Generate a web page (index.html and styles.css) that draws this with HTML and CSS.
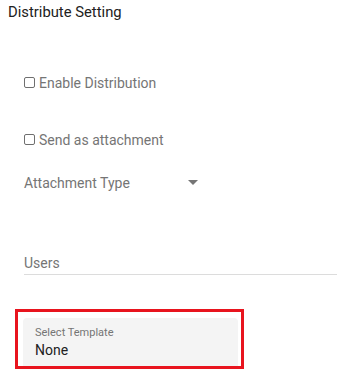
FILE: index.html
```html
<!DOCTYPE html>
<html>
<head>
<meta charset="utf-8">
<link rel="stylesheet" href="styles.css">
</head>
<body>
<div class="page">
  <div class="title">Distribute Setting</div>
  <div class="form">
    <label class="check check-first"><span class="box"></span><span>Enable Distribution</span></label>
    <label class="check check-second"><span class="box"></span><span>Send as attachment</span></label>
    <div class="select">
      <span>Attachment Type</span>
      <svg class="caret" width="10" height="5" viewBox="0 0 10 5"><path d="M0 0H10L5 5Z" fill="#757575"/></svg>
    </div>
    <div class="users">Users</div>
  </div>
  <div class="highlight">
    <div class="filled">
      <div class="flabel">Select Template</div>
      <div class="fvalue">None</div>
    </div>
  </div>
</div>
</body>
</html>
```

FILE: styles.css
```css
html, body {
  margin: 0;
  padding: 0;
  background: #fff;
}
body {
  font-family: Roboto, "Noto Sans", sans-serif;
  font-size: 14px;
  line-height: 20px;
}
.page {
  width: 337px;
  height: 381px;
  overflow: hidden;
}
.title {
  margin: 2px 0 0 8px;
  color: #212121;
  font-size: 14.8px;
}
.form {
  padding-left: 24px;
}
.check {
  display: flex;
  align-items: center;
  gap: 4px;
  color: #757575;
}
.check-first {
  margin-top: 51px;
}
.check-second {
  margin-top: 37px;
}
.box {
  width: 9px;
  height: 9px;
  border: 1.3px solid #6f6f6f;
  border-radius: 2px;
  margin-bottom: 1px;
}
.select {
  margin-top: 23px;
  width: 174px;
  display: flex;
  justify-content: space-between;
  align-items: center;
  color: #757575;
}
.caret {
  margin-top: -1px;
}
.users {
  margin-top: 60px;
  color: #757575;
  padding-bottom: 1px;
  border-bottom: 1px solid #dcdcdc;
}
.highlight {
  margin: 34px 0 0 15px;
  width: 215px;
  height: 48px;
  border: 3px solid #e8141e;
  padding: 6px 3px 0 5px;
}
.filled {
  height: 48px;
  background: #f4f4f4;
  border-radius: 4px 4px 0 0;
  padding: 8px 0 0 12px;
  box-sizing: border-box;
}
.flabel {
  font-size: 11px;
  line-height: 14px;
  color: #757575;
}
.fvalue {
  font-size: 14px;
  line-height: 20px;
  color: #212121;
}
```
